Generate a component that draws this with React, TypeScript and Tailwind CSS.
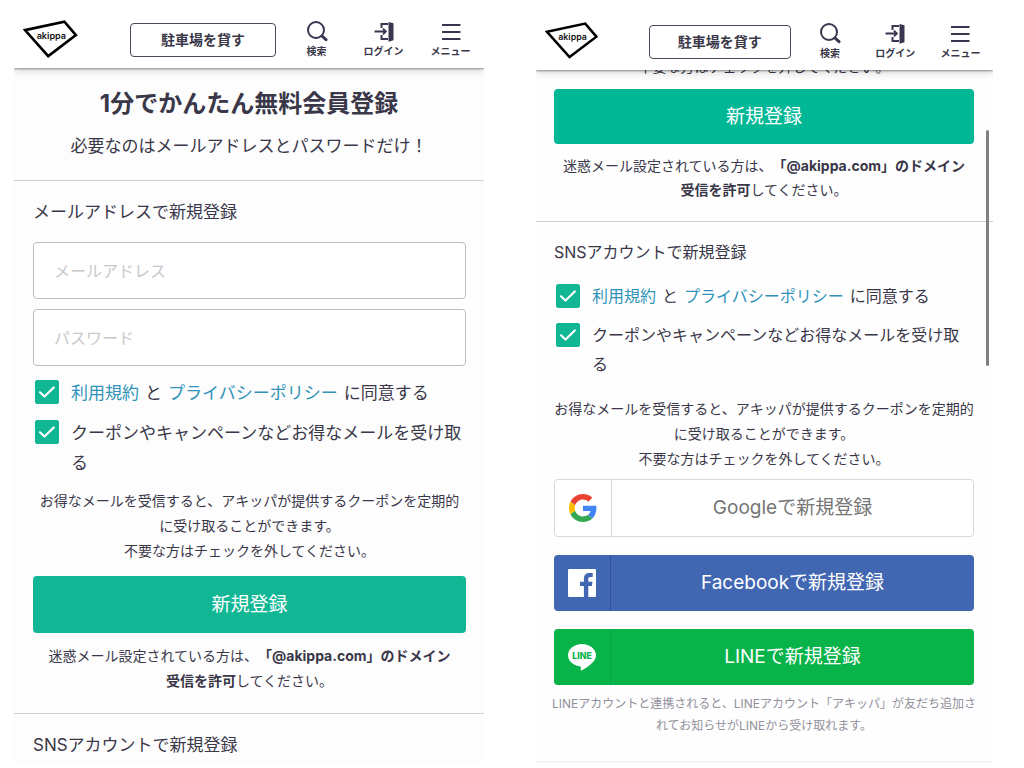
import { useId, useState } from "react";
import type { ReactNode } from "react";

function AkippaLogo() {
  return (
    <svg viewBox="0 0 54 38" className="w-full" role="img" aria-label="akippa">
      <polygon
        points="2,10 41,1.6 52.4,15 25,35.8"
        fill="none"
        stroke="#000"
        strokeWidth="2.6"
        strokeLinejoin="miter"
      />
      <text x="13.5" y="18.5" fontSize="9" fontWeight="600" fontFamily="Inter, sans-serif" fill="#111">
        akippa
      </text>
    </svg>
  );
}

function SearchIcon() {
  return (
    <svg viewBox="0 0 22 22" className="size-[22px]" fill="none" stroke="#3a3650" aria-hidden="true">
      <circle cx="10" cy="10" r="8" strokeWidth="2" />
      <path d="M16 16l4 3.700" strokeWidth="3" strokeLinecap="round" />
    </svg>
  );
}

function LoginIcon() {
  return (
    <svg viewBox="0 0 22 22" className="size-[22px]" fill="none" stroke="#3a3650" aria-hidden="true">
      <path d="M15 4H8.500v4M8.500 15v4H15" strokeWidth="2" />
      <path d="M1.500 11.500h10M10 8.700l2.800 2.800L10 14.300" strokeWidth="1.9" />
      <path d="M15.500 2l5 1.200v17l-5 1.500z" fill="#3a3650" stroke="none" />
    </svg>
  );
}

function MenuIcon() {
  return (
    <svg viewBox="0 0 22 22" className="size-[22px]" fill="none" stroke="#3a3650" aria-hidden="true">
      <path d="M2 5h18.500M2 12h18.500M2 19h18.500" strokeWidth="2" />
    </svg>
  );
}

function GoogleIcon() {
  return (
    <svg viewBox="0 0 48 48" className="size-7" aria-hidden="true">
      <path fill="#EA4335" d="M24 9.5c3.54 0 6.71 1.22 9.21 3.6l6.85-6.85C35.9 2.38 30.47 0 24 0 14.62 0 6.51 5.38 2.56 13.22l7.98 6.19C12.43 13.72 17.74 9.5 24 9.5z" />
      <path fill="#4285F4" d="M46.98 24.55c0-1.57-.15-3.09-.38-4.55H24v9.02h12.94c-.58 2.96-2.26 5.48-4.78 7.18l7.73 6c4.51-4.18 7.09-10.36 7.09-17.65z" />
      <path fill="#FBBC05" d="M10.53 28.59c-.48-1.45-.76-2.99-.76-4.59s.27-3.14.76-4.59l-7.98-6.19C.92 16.46 0 20.12 0 24c0 3.88.92 7.54 2.56 10.78l7.97-6.19z" />
      <path fill="#34A853" d="M24 48c6.48 0 11.93-2.13 15.89-5.81l-7.73-6c-2.15 1.45-4.92 2.3-8.16 2.3-6.26 0-11.57-4.22-13.47-9.91l-7.98 6.19C6.51 42.62 14.62 48 24 48z" />
    </svg>
  );
}

function FacebookIcon() {
  return (
    <svg viewBox="0 0 28 28" className="size-7" aria-hidden="true">
      <path
        fill="#fff"
        fillRule="evenodd"
        d="M1.200 0h25.600A1.200 1.200 0 0 1 28 1.200v25.600a1.200 1.200 0 0 1-1.200 1.200H1.200A1.200 1.200 0 0 1 0 26.800V1.200A1.200 1.200 0 0 1 1.200 0zM20.300 28V17h3.600l.6-4.300h-4.200V10c0-1.300.4-2.100 2.200-2.100h2.200V4.100c-.4 0-1.700-.2-3.300-.2-3.300 0-5.500 2-5.500 5.600v3.200H12V17h3.900v11z"
      />
    </svg>
  );
}

function LineIcon() {
  return (
    <svg viewBox="0 0 28 28" className="size-7" aria-hidden="true">
      <path
        fill="#fff"
        d="M14 1C6.300 1 0 6 0 12.200c0 5.500 5 10.100 11.700 11 .5.1 1.100.3 1.200.7.1.4.1.9 0 1.300l-.2 1.200c-.1.400-.3 1.400 1.200.8s8.200-4.800 11.100-8.200c2-2.200 3-4.400 3-6.800C28 6 21.700 1 14 1z"
      />
      <text x="14" y="15.500" textAnchor="middle" fontSize="8.800" fontWeight="800" fontFamily="Inter, sans-serif" fill="#08b34a">
        LINE
      </text>
    </svg>
  );
}

function NavItem({ icon, label }: { icon: ReactNode; label: string }) {
  return (
    <button type="button" className="flex flex-1 flex-col items-center gap-0.5">
      {icon}
      <span className="text-[10px] leading-[14px] font-bold whitespace-nowrap">{label}</span>
    </button>
  );
}

function Header() {
  return (
    <header className="relative z-10 grid grid-cols-[116fr_146fr_7fr_201fr] items-end bg-white pt-5 pb-2.5 shadow-[0_1px_2px_rgba(0,0,0,0.4),0_3px_8px_rgba(0,0,0,0.14)] [clip-path:inset(0_0_-12px_0)]">
      <a href="#top" className="ml-[9px] w-[47%] self-start">
        <AkippaLogo />
      </a>
      <button
        type="button"
        className="mb-px h-[34px] rounded border border-[#4a4758] text-[14px] leading-5 font-bold whitespace-nowrap"
      >
        駐車場を貸す
      </button>
      <span />
      <nav className="flex">
        <NavItem icon={<SearchIcon />} label="検索" />
        <NavItem icon={<LoginIcon />} label="ログイン" />
        <NavItem icon={<MenuIcon />} label="メニュー" />
      </nav>
    </header>
  );
}

function CheckRow({ children }: { children: ReactNode }) {
  const id = useId();
  const [checked, setChecked] = useState(true);
  return (
    <div className="flex items-start gap-3 pl-0.5">
      <span className="mt-0.5 grid size-6 shrink-0">
        <input
          id={id}
          type="checkbox"
          checked={checked}
          onChange={(e) => setChecked(e.target.checked)}
          className="peer size-6 appearance-none rounded-xs border border-[#11b795] bg-white [grid-area:1/1] checked:bg-[#11b795]"
        />
        <svg
          viewBox="0 0 24 24"
          className="pointer-events-none invisible size-6 [grid-area:1/1] peer-checked:visible"
          fill="none"
          stroke="#fff"
          strokeWidth="2.2"
          strokeLinecap="round"
          strokeLinejoin="round"
          aria-hidden="true"
        >
          <path d="M5 12.300l4.500 4.200L18.800 7.500" />
        </svg>
      </span>
      <label htmlFor={id}>{children}</label>
    </div>
  );
}

function Agreement() {
  return (
    <>
      <a href="#terms" className="text-[#2e93b8]">利用規約</a>
      <span className="mx-1.5">と</span>
      <a href="#privacy" className="text-[#2e93b8]">プライバシーポリシー</a>
      <span className="ml-1.5">に同意する</span>
    </>
  );
}

function MailNotice() {
  return (
    <>
      お得なメールを受信すると、アキッパが提供するクーポンを定期的
      <br />
      に受け取ることができます。
      <br />
      不要な方はチェックを外してください。
    </>
  );
}

function DomainNotice() {
  return (
    <>
      迷惑メール設定されている方は、<strong className="font-bold">「@akippa.com」のドメイン<br />受信を許可</strong>してください。
    </>
  );
}

function EmailScreen() {
  return (
    <main className="min-w-0 bg-[#fdfdfd]">
      <Header />
      <div className="border-b border-[#cfcfcf] pt-[18px] pb-5 text-center">
        <h1 className="text-2xl leading-9 font-bold">1分でかんたん無料会員登録</h1>
        <p className="mt-2.5 text-[17px] leading-7">必要なのはメールアドレスとパスワードだけ！</p>
      </div>
      <form onSubmit={(e) => e.preventDefault()} className="border-b border-[#cfcfcf] pt-[17px] pr-[18px] pb-5 pl-[19px]">
        <h2 className="text-[17px] leading-7">メールアドレスで新規登録</h2>
        <div className="mt-4 flex flex-col gap-2.5">
          <input
            type="email"
            aria-label="メールアドレス"
            placeholder="メールアドレス"
            className="h-[57px] w-full rounded border border-[#bdbdbd] bg-white px-5 text-[16px] placeholder:text-[#c8c8cc]"
          />
          <input
            type="password"
            aria-label="パスワード"
            placeholder="パスワード"
            className="h-[57px] w-full rounded border border-[#bdbdbd] bg-white px-5 text-[16px] placeholder:text-[#c8c8cc]"
          />
        </div>
        <div className="mt-3 flex flex-col gap-2.5 text-[17px] leading-[30px]">
          <CheckRow><Agreement /></CheckRow>
          <CheckRow>クーポンやキャンペーンなどお得なメールを受け取<br />る</CheckRow>
        </div>
        <p className="mt-2.5 text-center text-[14px] leading-[25px]"><MailNotice /></p>
        <button type="submit" className="mt-[13px] h-[57px] w-full rounded bg-[#11b795] text-[19px] text-white">
          新規登録
        </button>
        <p className="mt-2.5 text-center text-[14px] leading-[25px]"><DomainNotice /></p>
      </form>
      <h2 className="px-[19px] pt-[17px] text-[17px] leading-7">SNSアカウントで新規登録</h2>
    </main>
  );
}

function SnsScreen() {
  return (
    <main className="relative min-w-0 self-start border-b-2 border-[#f4f4f5] bg-[#fefefe]">
      <div className="pt-0.5">
        <Header />
      </div>
      <div className="overflow-hidden border-b border-[#cfcfcf] pr-[19px] pb-[19px] pl-[18px] text-center text-[14px] leading-6">
        <p className="-mt-[15px]">不要な方はチェックを外してください。</p>
        <button type="button" className="mt-2.5 h-[55px] w-full rounded bg-[#00b796] text-[19px] text-white">
          新規登録
        </button>
        <p className="mt-2.5"><DomainNotice /></p>
      </div>
      <section className="pt-4 pr-[19px] pb-6 pl-[18px]">
        <h2 className="text-[16px] leading-7">SNSアカウントで新規登録</h2>
        <div className="mt-4 flex flex-col gap-2.5 text-[16px] leading-[29px]">
          <CheckRow><Agreement /></CheckRow>
          <CheckRow>クーポンやキャンペーンなどお得なメールを受け取<br />る</CheckRow>
        </div>
        <p className="-mx-2 mt-[17px] text-center text-[14px] leading-[25px]"><MailNotice /></p>
        <div className="mt-2 flex flex-col gap-[18px] text-[19px]">
          <button type="button" className="flex h-[58px] items-stretch rounded border border-[#d9d9dd] bg-white text-[#757575]">
            <span className="grid w-[57px] place-items-center border-r border-[#d9d9dd]"><GoogleIcon /></span>
            <span className="flex-1 self-center">Googleで新規登録</span>
          </button>
          <button type="button" className="flex h-14 items-stretch rounded bg-[#4267b2] text-white">
            <span className="grid w-[57px] place-items-center border-r border-[#31549c]"><FacebookIcon /></span>
            <span className="flex-1 self-center">Facebookで新規登録</span>
          </button>
          <button type="button" className="flex h-14 items-stretch rounded bg-[#08b34a] text-white">
            <span className="grid w-[57px] place-items-center border-r border-[#07a644]"><LineIcon /></span>
            <span className="flex-1 self-center">LINEで新規登録</span>
          </button>
        </div>
        <p className="-mx-2 mt-2 text-center text-[12px] leading-[22px] text-[#92909c]">
          LINEアカウントと連携されると、LINEアカウント「アキッパ」が友だち追加さ
          <br />
          れてお知らせがLINEから受け取れます。
        </p>
      </section>
      <div className="absolute top-[130px] right-1 h-[236px] w-[3px] rounded-full bg-[#808080]" />
    </main>
  );
}

export default function App() {
  return (
    <div className="grid grid-cols-[470fr_457fr] gap-[52px] bg-white pr-[31px] pl-3.5 font-[Inter,'Noto_Sans_CJK_JP',sans-serif] text-[#3a3749] [text-spacing-trim:space-all]">
      <EmailScreen />
      <SnsScreen />
    </div>
  );
}
